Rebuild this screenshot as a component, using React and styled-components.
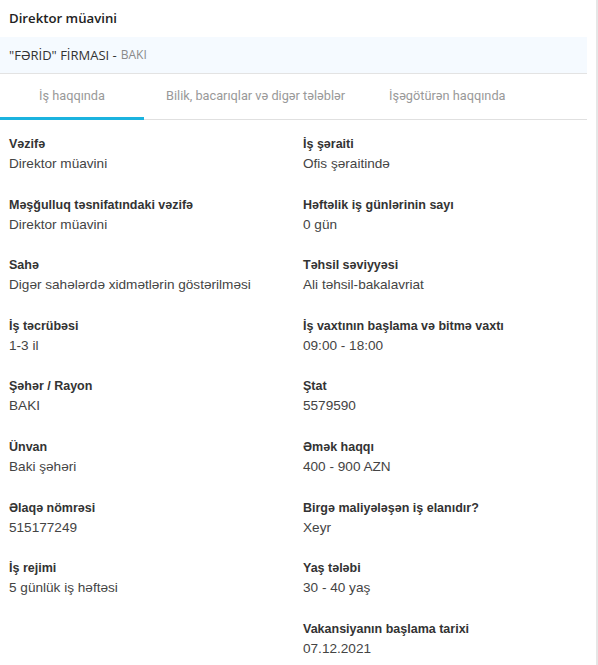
import React from "react";
import styled, { createGlobalStyle } from "styled-components";

const Global = createGlobalStyle`
  html, body { margin: 0; padding: 0; background: #fff; }
  body { width: 598px; height: 665px; overflow: hidden; }
`;

const Page = styled.div`
  display: flex;
  width: 598px;
  min-height: 665px;
`;

const Panel = styled.div`
  width: 587px;
  display: flex;
  flex-direction: column;
`;

const Gutter = styled.div`
  flex: 1;
  display: flex;
  justify-content: flex-end;
  &::after {
    content: "";
    width: 2px;
    background: #e6e6e6;
  }
`;

const Title = styled.h1`
  margin: 0;
  height: 37px;
  display: flex;
  align-items: center;
  padding: 0 9px;
  font-family: "Open Sans", "Noto Sans", sans-serif;
  font-weight: 600;
  font-size: 13.2px;
  line-height: 1;
  color: #222;
`;

const Company = styled.div`
  height: 36px;
  display: flex;
  align-items: center;
  padding: 0 9px;
  background: #f5faff;
  border-bottom: 1px solid #e3e3e3;
  font-family: "Open Sans", "Noto Sans", sans-serif;
  font-size: 13px;
  line-height: 1;
  color: #333;
`;

const City = styled.span`
  margin-left: 4px;
  font-size: 12px;
  color: #8a8a8a;
`;

const Tabs = styled.div`
  display: flex;
  height: 45px;
  border-bottom: 1px solid #e0e0e0;
`;

const Tab = styled.div`
  min-width: 144px;
  padding: 2px 22px 0;
  box-sizing: border-box;
  display: flex;
  align-items: center;
  justify-content: center;
  font-family: Roboto, "Liberation Sans", sans-serif;
  font-size: 12.75px;
  line-height: 1;
  color: #999;
  border-bottom: 3px solid ${(p) => (p.$active ? "#1bb3df" : "transparent")};
  margin-bottom: -1px;
`;

const Grid = styled.div`
  display: grid;
  grid-template-columns: 294px 1fr;
  row-gap: 20.6px;
  padding: 14px 9px 0;
`;

const Field = styled.div`
  display: flex;
  flex-direction: column;
  grid-column: ${(p) => p.$col};
`;

const Label = styled.div`
  font-family: "Liberation Sans", Arial, sans-serif;
  font-weight: 700;
  font-size: 12.5px;
  line-height: 20px;
  color: #333;
`;

const Value = styled.div`
  font-family: "Liberation Sans", Arial, sans-serif;
  font-size: 13.6px;
  line-height: 20px;
  color: #444;
`;

const left = [
  ["Vəzifə", "Direktor müavini"],
  ["Məşğulluq təsnifatındaki vəzifə", "Direktor müavini"],
  ["Sahə", "Digər sahələrdə xidmətlərin göstərilməsi"],
  ["İş təcrübəsi", "1-3 il"],
  ["Şəhər / Rayon", "BAKI"],
  ["Ünvan", "Baki şəhəri"],
  ["Əlaqə nömrəsi", "515177249"],
  ["İş rejimi", "5 günlük iş həftəsi"],
];

const right = [
  ["İş şəraiti", "Ofis şəraitində"],
  ["Həftəlik iş günlərinin sayı", "0 gün"],
  ["Təhsil səviyyəsi", "Ali təhsil-bakalavriat"],
  ["İş vaxtının başlama və bitmə vaxtı", "09:00 - 18:00"],
  ["Ştat", "5579590"],
  ["Əmək haqqı", "400 - 900 AZN"],
  ["Birgə maliyələşən iş elanıdır?", "Xeyr"],
  ["Yaş tələbi", "30 - 40 yaş"],
  ["Vakansiyanın başlama tarixi", "07.12.2021"],
];

export default function App() {
  const rows = [];
  for (let i = 0; i < right.length; i++) {
    if (left[i]) {
      rows.push(
        <Field key={"l" + i} $col={1}>
          <Label>{left[i][0]}</Label>
          <Value>{left[i][1]}</Value>
        </Field>
      );
    }
    rows.push(
      <Field key={"r" + i} $col={2}>
        <Label>{right[i][0]}</Label>
        <Value>{right[i][1]}</Value>
      </Field>
    );
  }
  return (
    <>
      <Global />
      <Page>
        <Panel>
          <Title>Direktor müavini</Title>
          <Company>
            "FƏRİD" FİRMASI -<City>BAKI</City>
          </Company>
          <Tabs>
            <Tab $active>İş haqqında</Tab>
            <Tab>Bilik, bacarıqlar və digər tələblər</Tab>
            <Tab>İşəgötürən haqqında</Tab>
          </Tabs>
          <Grid>{rows}</Grid>
        </Panel>
        <Gutter />
      </Page>
    </>
  );
}
